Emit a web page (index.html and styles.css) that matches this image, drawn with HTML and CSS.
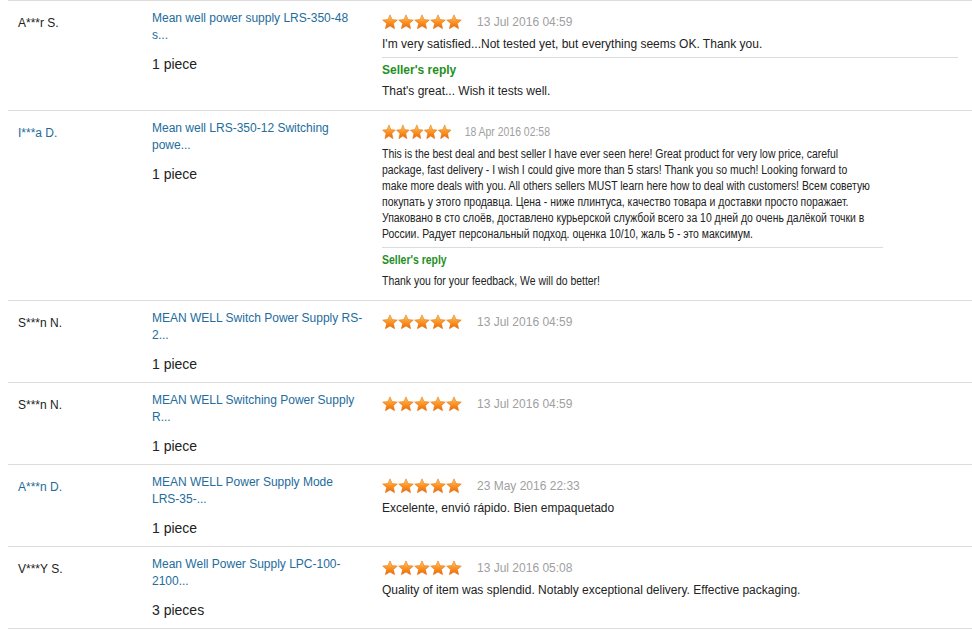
FILE: index.html
```html
<!DOCTYPE html>
<html>
<head>
<meta charset="utf-8">
<link rel="stylesheet" href="styles.css">
</head>
<body>
<svg width="0" height="0" class="defs">
  <defs>
    <linearGradient id="sg" x1="0" y1="0" x2="0" y2="1">
      <stop offset="0" stop-color="#ffd070"/>
      <stop offset="0.45" stop-color="#fb9a2a"/>
      <stop offset="1" stop-color="#ec660a"/>
    </linearGradient>
    <symbol id="star" viewBox="0 0 16 16">
      <polygon points="8,0.9 10.1,5.6 15.3,6.1 11.4,9.5 12.6,14.7 8,12 3.4,14.7 4.6,9.5 0.7,6.1 5.9,5.6" fill="url(#sg)" stroke="#e07818" stroke-width="0.6" stroke-linejoin="round"/>
    </symbol>
  </defs>
</svg>
<div class="list">

  <div class="row">
    <div class="name">A***r S.</div>
    <div class="product"><a class="plink">Mean well power supply LRS-350-48 s...</a><div class="qty">1 piece</div></div>
    <div class="review">
      <div class="head"><span class="stars"><svg><use href="#star"/></svg><svg><use href="#star"/></svg><svg><use href="#star"/></svg><svg><use href="#star"/></svg><svg><use href="#star"/></svg></span><span class="date">13 Jul 2016 04:59</span></div>
      <div class="text">I'm very satisfied...Not tested yet, but everything seems OK. Thank you.</div>
      <div class="reply">
        <div class="reply-title">Seller's reply</div>
        <div class="reply-text">That's great... Wish it tests well.</div>
      </div>
    </div>
  </div>

  <div class="row">
    <div class="name blue">I***a D.</div>
    <div class="product"><a class="plink">Mean well LRS-350-12 Switching powe...</a><div class="qty">1 piece</div></div>
    <div class="review narrow">
      <div class="head"><span class="stars"><svg><use href="#star"/></svg><svg><use href="#star"/></svg><svg><use href="#star"/></svg><svg><use href="#star"/></svg><svg><use href="#star"/></svg></span><span class="date">18 Apr 2016 02:58</span></div>
      <div class="text">This is the best deal and best seller I have ever seen here! Great product for very low price, careful<br>package, fast delivery - I wish I could give more than 5 stars! Thank you so much! Looking forward to<br>make more deals with you. All others sellers MUST learn here how to deal with customers! Всем советую<br>покупать у этого продавца. Цена - ниже плинтуса, качество товара и доставки просто поражает.<br>Упаковано в сто слоёв, доставлено курьерской службой всего за 10 дней до очень далёкой точки в<br>России. Радует персональный подход. оценка 10/10, жаль 5 - это максимум.</div>
      <div class="reply">
        <div class="reply-title">Seller's reply</div>
        <div class="reply-text">Thank you for your feedback, We will do better!</div>
      </div>
    </div>
  </div>

  <div class="row">
    <div class="name">S***n N.</div>
    <div class="product"><a class="plink">MEAN WELL Switch Power Supply RS-2...</a><div class="qty">1 piece</div></div>
    <div class="review">
      <div class="head"><span class="stars"><svg><use href="#star"/></svg><svg><use href="#star"/></svg><svg><use href="#star"/></svg><svg><use href="#star"/></svg><svg><use href="#star"/></svg></span><span class="date">13 Jul 2016 04:59</span></div>
    </div>
  </div>

  <div class="row">
    <div class="name">S***n N.</div>
    <div class="product"><a class="plink">MEAN WELL Switching Power Supply R...</a><div class="qty">1 piece</div></div>
    <div class="review">
      <div class="head"><span class="stars"><svg><use href="#star"/></svg><svg><use href="#star"/></svg><svg><use href="#star"/></svg><svg><use href="#star"/></svg><svg><use href="#star"/></svg></span><span class="date">13 Jul 2016 04:59</span></div>
    </div>
  </div>

  <div class="row">
    <div class="name blue">A***n D.</div>
    <div class="product"><a class="plink">MEAN WELL Power Supply Mode <span class="nowrap">LRS-35-...</span></a><div class="qty">1 piece</div></div>
    <div class="review">
      <div class="head"><span class="stars"><svg><use href="#star"/></svg><svg><use href="#star"/></svg><svg><use href="#star"/></svg><svg><use href="#star"/></svg><svg><use href="#star"/></svg></span><span class="date">23 May 2016 22:33</span></div>
      <div class="text">Excelente, envió rápido. Bien empaquetado</div>
    </div>
  </div>

  <div class="row last">
    <div class="name">V***Y S.</div>
    <div class="product"><a class="plink">Mean Well Power Supply LPC-100-2100...</a><div class="qty">3 pieces</div></div>
    <div class="review">
      <div class="head"><span class="stars"><svg><use href="#star"/></svg><svg><use href="#star"/></svg><svg><use href="#star"/></svg><svg><use href="#star"/></svg><svg><use href="#star"/></svg></span><span class="date">13 Jul 2016 05:08</span></div>
      <div class="text">Quality of item was splendid. Notably exceptional delivery. Effective packaging.</div>
    </div>
  </div>

</div>
</body>
</html>
```

FILE: styles.css
```css
html, body {
  margin: 0;
  padding: 0;
  background: #fff;
}
body {
  font-family: "Liberation Sans", Arial, sans-serif;
  font-size: 12px;
  color: #333;
}
.defs {
  position: absolute;
  width: 0;
  height: 0;
}
.list {
  margin-left: 8px;
}
.row {
  display: flex;
  border-top: 1px solid #dcdcdc;
  padding: 9px 0;
}
.row.last {
  border-bottom: 1px solid #dcdcdc;
}
.name {
  width: 144px;
  flex: none;
  padding-left: 10px;
  padding-top: 5px;
  line-height: 17px;
  box-sizing: border-box;
  color: #222;
}
.name.blue {
  color: #1f6a9a;
}
.product {
  width: 214px;
  flex: none;
  margin-right: 16px;
  line-height: 17px;
}
.plink {
  color: #236c9c;
  text-decoration: none;
  display: block;
}
.nowrap {
  white-space: nowrap;
}
.qty {
  margin-top: 11px;
  font-size: 14px;
  line-height: 18px;
  color: #222;
}
.review {
  width: 576px;
  flex: none;
  padding-bottom: 2px;
}
.review.narrow {
  transform: scaleX(0.87);
  transform-origin: left top;
}
.head {
  height: 24px;
  display: flex;
  align-items: center;
}
.stars {
  display: flex;
  width: 80px;
  height: 16px;
}
.stars svg {
  width: 16px;
  height: 16px;
  display: block;
}
.date {
  margin-left: 15px;
  color: #a0a0a0;
  font-size: 12px;
}
.text {
  margin-top: 2px;
  line-height: 16px;
  color: #222;
}
.reply {
  margin-top: 5px;
  border-top: 1px solid #dcdcdc;
}
.reply-title {
  margin-top: 4px;
  line-height: 16px;
  font-weight: bold;
  color: #1e8f1e;
}
.reply-text {
  margin-top: 5px;
  line-height: 16px;
  color: #222;
}
```
